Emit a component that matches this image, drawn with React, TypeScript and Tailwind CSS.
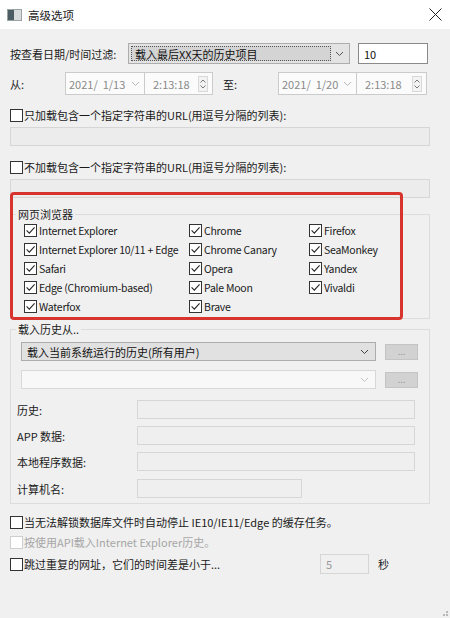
import React from "react";

const font = { fontFamily: '"Noto Sans CJK SC", "Noto Sans", sans-serif' };

function Check({ checked = false, disabled = false }: { checked?: boolean; disabled?: boolean }) {
  return (
    <span
      className={`w-[13px] h-[13px] border bg-white flex items-center justify-center shrink-0 ${
        disabled ? "border-[#cfcfcf]" : "border-[#333333]"
      }`}
    >
      {checked && (
        <svg width="11" height="11" viewBox="0 0 11 11">
          <path d="M1.6 5.4 L4.3 8.1 L9.6 2.4" stroke="#262626" strokeWidth="1.1" fill="none" />
        </svg>
      )}
    </span>
  );
}

function Chevron({ color = "#6b6b6b" }: { color?: string }) {
  return (
    <svg width="9" height="6" viewBox="0 0 9 6">
      <path d="M1 1 L4.5 4.5 L8 1" stroke={color} strokeWidth="1" fill="none" />
    </svg>
  );
}

function Spinner() {
  return (
    <span className="w-[10px] h-[16px] border border-[#d8d8d8] bg-[#f3f3f3] flex flex-col items-center justify-center gap-[2px]">
      <svg width="6" height="4" viewBox="0 0 6 4">
        <path d="M0.5 3.5 L3 1 L5.5 3.5" stroke="#7a7a7a" strokeWidth="1" fill="none" />
      </svg>
      <svg width="6" height="4" viewBox="0 0 6 4">
        <path d="M0.5 0.5 L3 3 L5.5 0.5" stroke="#7a7a7a" strokeWidth="1" fill="none" />
      </svg>
    </span>
  );
}

function DateTime({ date, dateW, timeW }: { date: string; dateW: string; timeW: string }) {
  return (
    <div className="flex h-[23px]">
      <div className={`${dateW} h-full border border-[#cbcbcb] bg-[#fbfbfb] flex items-center justify-between pl-[3px] pr-[4px]`}>
        <span className="text-[#8a8a8a] whitespace-pre">{date}</span>
        <Chevron color="#b5b5b5" />
      </div>
      <div className={`${timeW} h-full border border-l-0 border-[#cbcbcb] bg-[#fbfbfb] flex items-center justify-between pl-[8px] pr-[4px]`}>
        <span className="text-[#8a8a8a]">2:13:18</span>
        <Spinner />
      </div>
    </div>
  );
}

const browsers: [string, string, string | null][] = [
  ["Internet Explorer", "Chrome", "Firefox"],
  ["Internet Explorer 10/11 + Edge", "Chrome Canary", "SeaMonkey"],
  ["Safari", "Opera", "Yandex"],
  ["Edge (Chromium-based)", "Pale Moon", "Vivaldi"],
  ["Waterfox", "Brave", null],
];

function BrowserItem({ name }: { name: string | null }) {
  if (!name) return <div />;
  return (
    <div className="flex items-center gap-[2px] h-[19px]">
      <Check checked />
      <span className="text-[#1a1a1a] text-[10.5px] tracking-[-0.25px]">{name}</span>
    </div>
  );
}

function FieldRow({ label, w, mt }: { label: string; w: string; mt: string }) {
  return (
    <div className={`flex items-center ${mt} pl-[6px]`}>
      <span className="w-[120px] text-[#1a1a1a]">{label}</span>
      <div className={`${w} h-[19px] border border-[#d6d6d6] bg-[#efefef]`} />
    </div>
  );
}

export default function App() {
  return (
    <div className="w-[450px] h-[618px] bg-[#f0f0f0] relative overflow-hidden text-[11px] leading-[14px] text-black" style={font}>
      {/* Title bar */}
      <div className="h-[29px] bg-white flex items-center pl-[7px] pr-[8px]">
        <svg width="15" height="12" viewBox="0 0 15 12">
          <rect x="0.5" y="0.5" width="14" height="11" fill="#d8dcdc" stroke="#9aa2a4" />
          <rect x="1" y="1" width="6" height="10" fill="#4c5d63" />
        </svg>
        <span className="ml-[6px] text-[#1a1a1a] text-[11.5px]">高级选项</span>
        <div className="flex-1" />
        <svg width="13" height="13" viewBox="0 0 13 13">
          <path d="M0.5 0.5 L12.5 12.5 M12.5 0.5 L0.5 12.5" stroke="#222" strokeWidth="1" />
        </svg>
      </div>

      <div className="px-[10px]">
        {/* Filter row */}
        <div className="flex items-center h-[21px] mt-[14px]">
          <span className="w-[118px] text-[#1a1a1a]">按查看日期/时间过滤:</span>
          <div className="w-[222px] h-full border border-[#adadad] bg-[#e3e3e3] flex items-center p-[2px]">
            <div className="flex-1 h-full border border-dotted border-[#555] bg-[#d4d4d4] flex items-center pl-[3px] text-[#111]">
              载入最后XX天的历史项目
            </div>
            <div className="w-[16px] flex justify-center">
              <Chevron color="#555" />
            </div>
          </div>
          <div className="ml-[8px] w-[70px] h-full border border-[#8a8a8a] bg-white flex items-center pl-[5px] text-[#111]">
            10
          </div>
        </div>

        {/* Date row */}
        <div className="flex items-center mt-[8px]">
          <span className="w-[55px] text-[#1a1a1a]">从:</span>
          <DateTime date="2021/  1/13" dateW="w-[80px]" timeW="w-[68px]" />
          <span className="w-[65px] pl-[10px] text-[#1a1a1a]">至:</span>
          <DateTime date="2021/  1/20" dateW="w-[79px]" timeW="w-[70px]" />
        </div>

        {/* URL include */}
        <div className="flex items-center gap-[1px] mt-[13px] h-[14px]">
          <Check />
          <span className="text-[#1a1a1a]">只加载包含一个指定字符串的URL(用逗号分隔的列表):</span>
        </div>
        <div className="mt-[5px] w-[420px] h-[19px] border border-[#d6d6d6] bg-[#ececec]" />

        {/* URL exclude */}
        <div className="flex items-center gap-[1px] mt-[14px] h-[14px]">
          <Check />
          <span className="text-[#1a1a1a]">不加载包含一个指定字符串的URL(用逗号分隔的列表):</span>
        </div>
        <div className="mt-[5px] w-[420px] h-[19px] border border-[#d6d6d6] bg-[#ececec]" />

        {/* Browsers group */}
        <fieldset className="mt-[9px] w-[420px] border border-[#dcdcdc] pb-[2px]">
          <legend className="ml-[5px] px-[2px] text-[#1a1a1a]">网页浏览器</legend>
          <div className="grid grid-cols-[165px_120px_1fr] pl-[13px]">
            {browsers.map((row, i) => (
              <React.Fragment key={i}>
                <BrowserItem name={row[0]} />
                <BrowserItem name={row[1]} />
                <BrowserItem name={row[2]} />
              </React.Fragment>
            ))}
          </div>
        </fieldset>

        {/* Load history group */}
        <fieldset className="mt-[3px] w-[420px] border border-[#dcdcdc] pb-[5px]">
          <legend className="ml-[5px] px-[2px] text-[#1a1a1a]">载入历史从..</legend>
          <div className="flex items-center mt-[6px] pl-[10px]">
            <div className="w-[355px] h-[19px] border border-[#adadad] bg-[#e1e1e1] flex items-center justify-between pl-[5px] pr-[6px] text-[#111]">
              载入当前系统运行的历史(所有用户)
              <Chevron color="#444" />
            </div>
            <div className="ml-[9px] w-[33px] h-[16px] border border-[#c4c4c4] bg-[#d2d2d2] flex items-center justify-center text-[#9a9a9a] text-[9px] leading-none">
              ...
            </div>
          </div>
          <div className="flex items-center mt-[9px] pl-[10px]">
            <div className="w-[355px] h-[19px] border border-[#d8d8d8] bg-[#f8f8f8] flex items-center justify-end pr-[6px]">
              <Chevron color="#c2c2c2" />
            </div>
            <div className="ml-[9px] w-[33px] h-[16px] border border-[#c4c4c4] bg-[#d2d2d2] flex items-center justify-center text-[#9a9a9a] text-[9px] leading-none">
              ...
            </div>
          </div>
          <FieldRow label="历史:" w="w-[278px]" mt="mt-[11px]" />
          <FieldRow label="APP 数据:" w="w-[278px]" mt="mt-[7px]" />
          <FieldRow label="本地程序数据:" w="w-[278px]" mt="mt-[7px]" />
          <FieldRow label="计算机名:" w="w-[165px]" mt="mt-[8px]" />
        </fieldset>

        {/* Bottom options */}
        <div className="flex items-center gap-[1px] mt-[8px] h-[20px]">
          <Check />
          <span className="text-[#1a1a1a]">当无法解锁数据库文件时自动停止 IE10/IE11/Edge 的缓存任务。</span>
        </div>
        <div className="flex items-center gap-[1px] h-[20px]">
          <Check disabled />
          <span className="text-[#a6a6a6]">按使用API载入Internet Explorer历史。</span>
        </div>
        <div className="flex items-center h-[22px] mt-[1px]">
          <div className="flex items-center gap-[1px] w-[310px]">
            <Check />
            <span className="text-[#1a1a1a]">跳过重复的网址，它们的时间差是小于...</span>
          </div>
          <div className="w-[49px] h-[20px] border border-[#d6d6d6] bg-[#f0f0f0] flex items-center pl-[5px] text-[#9a9a9a]">5</div>
          <span className="ml-[9px] text-[#1a1a1a]">秒</span>
        </div>
      </div>

      {/* Red annotation box */}
      <div className="absolute left-[10px] top-[192px] w-[393px] h-[128px] border-[3px] border-[#d8342e] rounded-[4px] pointer-events-none" />

      {/* size grip */}
      <svg className="absolute right-[1px] bottom-[1px]" width="10" height="10" viewBox="0 0 10 10">
        <rect x="7" y="7" width="2" height="2" fill="#b8b8b8" />
        <rect x="4" y="7" width="2" height="2" fill="#b8b8b8" />
        <rect x="7" y="4" width="2" height="2" fill="#b8b8b8" />
      </svg>
    </div>
  );
}
